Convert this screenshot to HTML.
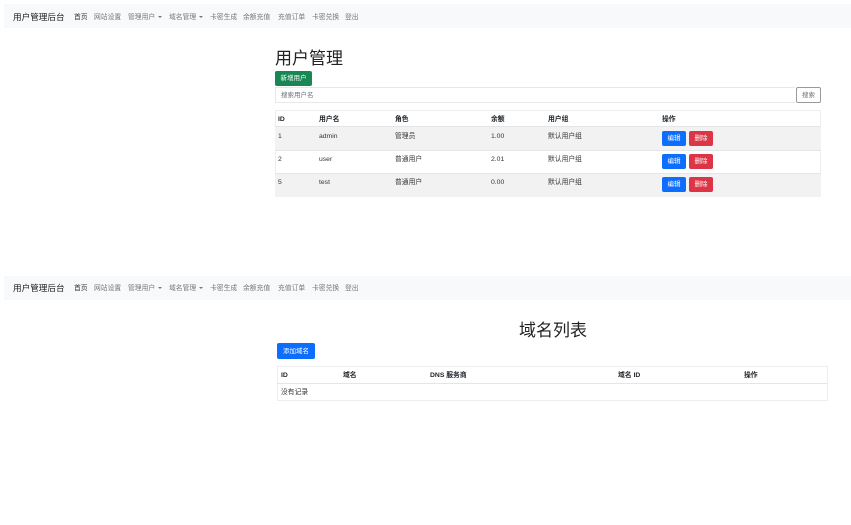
<!DOCTYPE html>
<html><head><meta charset="utf-8"><style>
*{margin:0;padding:0;box-sizing:border-box}
body{width:851px;height:525px;background:#fff;position:relative;font-family:"Liberation Sans","Noto Sans CJK SC",sans-serif;color:#212529;overflow:hidden}
.a{position:absolute;white-space:nowrap;line-height:10px}
.nav{position:absolute;left:4px;width:847px;height:24px;background:#f8f9fa}
.brand{font-size:8.6px;color:#222;line-height:12px}
.ni{font-size:6.8px;color:#777}
.ni.h{color:#333}
.car{display:inline-block;border-top:2.5px solid #777;border-left:2px solid transparent;border-right:2px solid transparent;vertical-align:middle;margin-left:3px}
.btn{position:absolute;border-radius:2px;color:#fff;font-size:6.5px;text-align:center}
.t{font-size:6.8px;color:#333}
.th{font-size:6.8px;font-weight:bold}
.row{position:absolute;border-top:1px solid #e3e6e9}
</style></head><body>

<div class="nav" style="top:4px"></div>
<div class="a brand" style="left:13px;top:11px">用户管理后台</div>
<div class="a ni h" style="left:74px;top:13px">首页</div>
<div class="a ni" style="left:94px;top:13px">网站设置</div>
<div class="a ni" style="left:128px;top:13px">管理用户<span class="car"></span></div>
<div class="a ni" style="left:169px;top:13px">域名管理<span class="car"></span></div>
<div class="a ni" style="left:210px;top:13px">卡密生成</div>
<div class="a ni" style="left:243px;top:13px">余额充值</div>
<div class="a ni" style="left:278px;top:13px">充值订单</div>
<div class="a ni" style="left:312px;top:13px">卡密兑换</div>
<div class="a ni" style="left:345px;top:13px">登出</div>

<div class="a" style="left:275px;top:48px;font-size:17px;line-height:22px;color:#222">用户管理</div>
<div class="btn" style="left:275px;top:71px;width:37px;height:15px;background:#198754;line-height:15px">新增用户</div>
<div class="a" style="left:275px;top:87px;width:520px;height:16px;border:1px solid #e6e8ea;border-right:none;font-size:6.5px;color:#6c757d;padding:3px 5px">搜索用户名</div>
<div class="a" style="left:796px;top:87px;width:25px;height:16px;border:1px solid #999;border-radius:2px;font-size:6.5px;color:#6c757d;text-align:center;line-height:15px">搜索</div>

<div class="a" style="left:275px;top:110px;width:546px;height:87px;border:1px solid #eceef0"></div>
<div class="row" style="left:275px;top:126px;width:546px;height:24px;background:#f2f2f2"></div>
<div class="row" style="left:275px;top:150px;width:546px;height:23px"></div>
<div class="row" style="left:275px;top:173px;width:546px;height:24px;background:#f2f2f2"></div>
<div class="a th" style="left:278px;top:115px">ID</div>
<div class="a th" style="left:319px;top:115px">用户名</div>
<div class="a th" style="left:395px;top:115px">角色</div>
<div class="a th" style="left:491px;top:115px">余额</div>
<div class="a th" style="left:548px;top:115px">用户组</div>
<div class="a th" style="left:662px;top:115px">操作</div>

<div class="a t" style="left:278px;top:132px">1</div><div class="a t" style="left:319px;top:132px">admin</div><div class="a t" style="left:395px;top:132px">管理员</div><div class="a t" style="left:491px;top:132px">1.00</div><div class="a t" style="left:548px;top:132px">默认用户组</div>
<div class="a t" style="left:278px;top:155px">2</div><div class="a t" style="left:319px;top:155px">user</div><div class="a t" style="left:395px;top:155px">普通用户</div><div class="a t" style="left:491px;top:155px">2.01</div><div class="a t" style="left:548px;top:155px">默认用户组</div>
<div class="a t" style="left:278px;top:178px">5</div><div class="a t" style="left:319px;top:178px">test</div><div class="a t" style="left:395px;top:178px">普通用户</div><div class="a t" style="left:491px;top:178px">0.00</div><div class="a t" style="left:548px;top:178px">默认用户组</div>

<div class="btn" style="left:662px;top:131px;width:24px;height:15px;line-height:16px;background:#0d6efd">编辑</div>
<div class="btn" style="left:689px;top:131px;width:24px;height:15px;line-height:16px;background:#dc3545">删除</div>
<div class="btn" style="left:662px;top:154px;width:24px;height:15px;line-height:16px;background:#0d6efd">编辑</div>
<div class="btn" style="left:689px;top:154px;width:24px;height:15px;line-height:16px;background:#dc3545">删除</div>
<div class="btn" style="left:662px;top:177px;width:24px;height:15px;line-height:16px;background:#0d6efd">编辑</div>
<div class="btn" style="left:689px;top:177px;width:24px;height:15px;line-height:16px;background:#dc3545">删除</div>

<div class="nav" style="top:276px"></div>
<div class="a brand" style="left:13px;top:282px">用户管理后台</div>
<div class="a ni h" style="left:74px;top:284px">首页</div>
<div class="a ni" style="left:94px;top:284px">网站设置</div>
<div class="a ni" style="left:128px;top:284px">管理用户<span class="car"></span></div>
<div class="a ni" style="left:169px;top:284px">域名管理<span class="car"></span></div>
<div class="a ni" style="left:210px;top:284px">卡密生成</div>
<div class="a ni" style="left:243px;top:284px">余额充值</div>
<div class="a ni" style="left:278px;top:284px">充值订单</div>
<div class="a ni" style="left:312px;top:284px">卡密兑换</div>
<div class="a ni" style="left:345px;top:284px">登出</div>

<div class="a" style="left:519px;top:320px;font-size:17px;line-height:22px;color:#222">域名列表</div>
<div class="btn" style="left:277px;top:343px;width:38px;height:16px;line-height:17px;background:#0d6efd">添加域名</div>
<div class="a" style="left:277px;top:366px;width:551px;height:35px;border:1px solid #eceef0"></div>
<div class="row" style="left:277px;top:383px;width:551px;height:0"></div>
<div class="a th" style="left:281px;top:371px">ID</div>
<div class="a th" style="left:343px;top:371px">域名</div>
<div class="a th" style="left:430px;top:371px">DNS 服务商</div>
<div class="a th" style="left:618px;top:371px">域名 ID</div>
<div class="a th" style="left:744px;top:371px">操作</div>
<div class="a t" style="left:281px;top:388px">没有记录</div>
</body></html>
